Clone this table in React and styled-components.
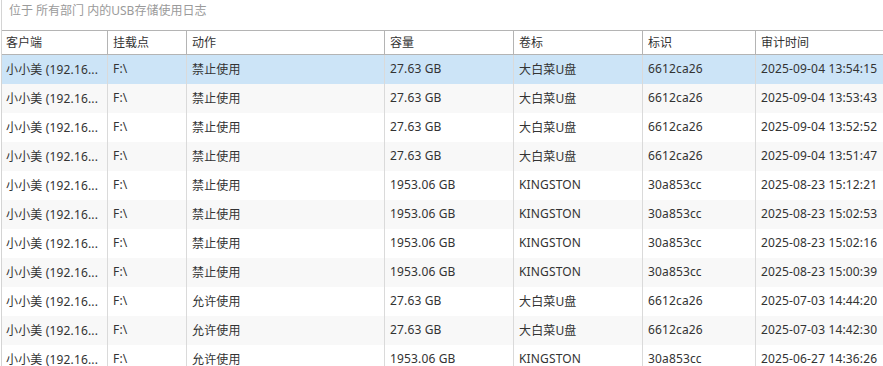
import React from "react";
import styled, { createGlobalStyle } from "styled-components";

const GlobalStyle = createGlobalStyle`
  html, body {
    margin: 0;
    padding: 0;
    background: #fff;
    overflow: hidden;
  }
  body {
    font-family: "Noto Sans", "Noto Sans CJK SC", sans-serif;
    font-size: 12px;
    color: #333;
  }
`;

// 列宽（最后一列占满剩余）
const COLS = "106px 79px 198px 129px 129px 113px 1fr";

const HEADERS = ["客户端", "挂载点", "动作", "容量", "卷标", "标识", "审计时间"];

const ROWS = [
  ["禁止使用", "27.63 GB", "大白菜U盘", "6612ca26", "2025-09-04 13:54:15"],
  ["禁止使用", "27.63 GB", "大白菜U盘", "6612ca26", "2025-09-04 13:53:43"],
  ["禁止使用", "27.63 GB", "大白菜U盘", "6612ca26", "2025-09-04 13:52:52"],
  ["禁止使用", "27.63 GB", "大白菜U盘", "6612ca26", "2025-09-04 13:51:47"],
  ["禁止使用", "1953.06 GB", "KINGSTON", "30a853cc", "2025-08-23 15:12:21"],
  ["禁止使用", "1953.06 GB", "KINGSTON", "30a853cc", "2025-08-23 15:02:53"],
  ["禁止使用", "1953.06 GB", "KINGSTON", "30a853cc", "2025-08-23 15:02:16"],
  ["禁止使用", "1953.06 GB", "KINGSTON", "30a853cc", "2025-08-23 15:00:39"],
  ["允许使用", "27.63 GB", "大白菜U盘", "6612ca26", "2025-07-03 14:44:20"],
  ["允许使用", "27.63 GB", "大白菜U盘", "6612ca26", "2025-07-03 14:42:30"],
  ["允许使用", "1953.06 GB", "KINGSTON", "30a853cc", "2025-06-27 14:36:26"],
];

export default function App() {
  return (
    <Panel>
      <GlobalStyle />
      <Caption>位于 所有部门 内的USB存储使用日志</Caption>
      <Grid>
        <HeaderRow>
          {HEADERS.map((h) => (
            <HeadCell key={h}>{h}</HeadCell>
          ))}
        </HeaderRow>
        {ROWS.map((r, i) => (
          <Row key={i} $selected={i === 0} $striped={i % 2 === 1}>
            <Cell>小小美 (192.16...</Cell>
            <Cell>F:\</Cell>
            {r.map((v, j) => (
              <Cell key={j}>{v}</Cell>
            ))}
          </Row>
        ))}
      </Grid>
    </Panel>
  );
}

/* 外框 */
const Panel = styled.div`
  width: 883px;
  height: 366px;
  box-sizing: border-box;
  border-left: 1px solid #d4d4d4;
  margin-left: 1px;
  overflow: hidden;
`;

/* 顶部说明文字 */
const Caption = styled.div`
  height: 30px;
  box-sizing: border-box;
  padding: 2px 0 0 7px;
  line-height: 18px;
  color: #9a9a9a;
  white-space: nowrap;
`;

const Grid = styled.div`
  display: flex;
  flex-direction: column;
`;

/* 表头 */
const HeaderRow = styled.div`
  display: grid;
  grid-template-columns: ${COLS};
  height: 25px;
  box-sizing: border-box;
  border-top: 1px solid #b4b4b4;
  border-bottom: 1px solid #b4b4b4;
`;

const HeadCell = styled.div`
  display: flex;
  align-items: center;
  padding: 0 0 1px 5px;
  border-right: 1px solid #b4b4b4;
  color: #333;
  white-space: nowrap;
  overflow: hidden;

  &:first-child {
    padding-left: 4px;
  }
  &:last-child {
    border-right: 0;
  }
`;

/* 数据行 */
const Row = styled.div`
  display: grid;
  grid-template-columns: ${COLS};
  height: 29px;
  background: ${(p) => (p.$selected ? "#cce4f7" : p.$striped ? "#f8f8f8" : "#fff")};
`;

const Cell = styled.div`
  display: flex;
  align-items: center;
  padding: 0 0 2px 5px;
  border-right: 1px solid #dadada;
  color: #333;
  letter-spacing: 0.15px;
  white-space: nowrap;
  overflow: hidden;

  &:first-child {
    padding-left: 4px;
  }
  &:last-child {
    border-right: 0;
  }
`;
